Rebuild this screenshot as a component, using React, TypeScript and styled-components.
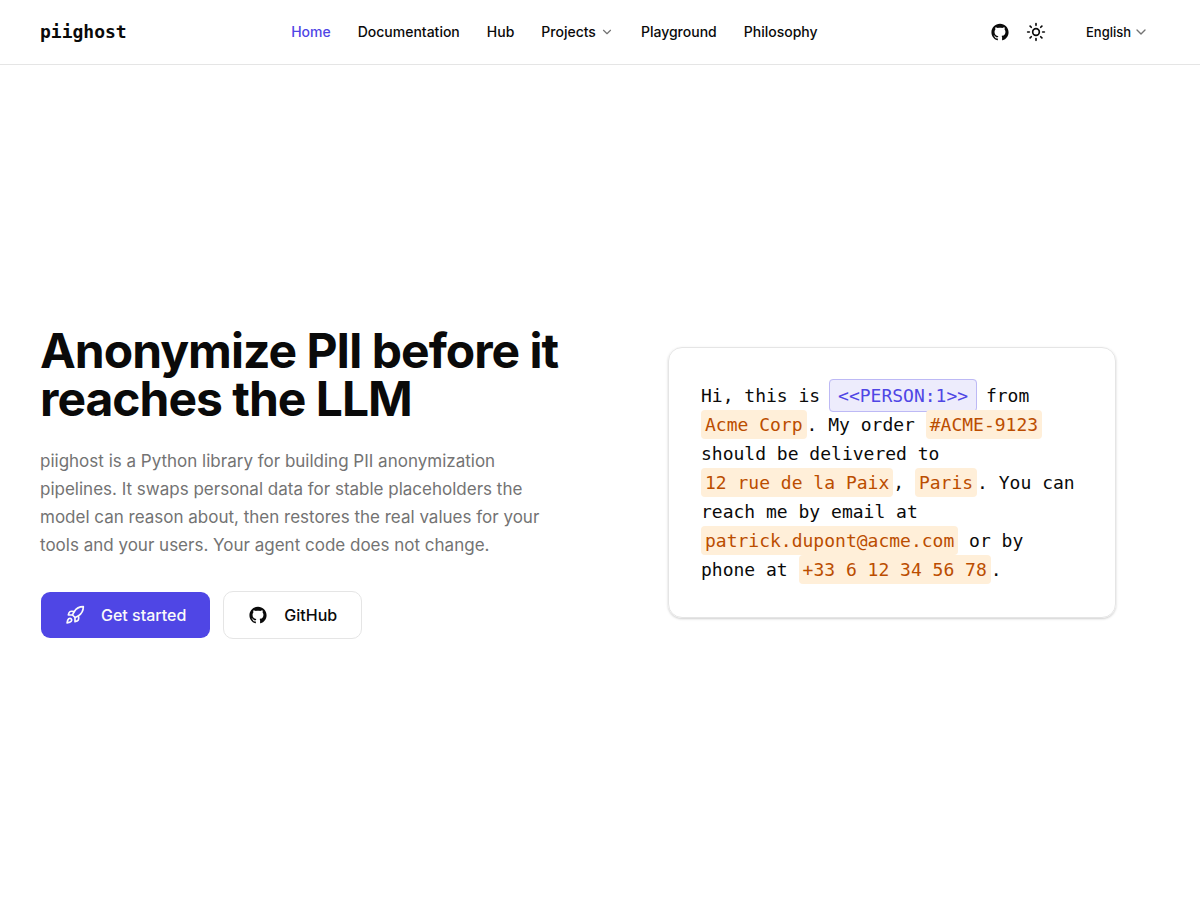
import React from "react";
import styled, { createGlobalStyle } from "styled-components";
import { ChevronDown, Rocket, Sun } from "lucide-react";
import { SiGithub } from "react-icons/si";

const sans = `Inter, "Liberation Sans", sans-serif`;
const mono = `"DejaVu Sans Mono", "Liberation Mono", monospace`;

const GlobalStyle = createGlobalStyle`
  *, *::before, *::after { box-sizing: border-box; }
  body {
    margin: 0;
    background: #ffffff;
    color: #0a0a0a;
    font-family: ${sans};
  }
`;

const Page = styled.div`
  min-height: 100vh;
  display: flex;
  flex-direction: column;
`;

const Header = styled.header`
  display: flex;
  align-items: center;
  justify-content: space-between;
  min-height: 65px;
  padding: 0 40px;
  border-bottom: 1px solid #e5e5e5;
`;

const Brand = styled.a`
  font-family: ${mono};
  font-size: 18px;
  line-height: 28px;
  font-weight: 700;
  color: inherit;
  text-decoration: none;
`;

const Nav = styled.nav`
  display: flex;
  align-items: center;
  gap: 27px;
`;

const NavLink = styled.a<{ $active?: boolean }>`
  font-size: 14px;
  line-height: 20px;
  font-weight: 500;
  text-decoration: none;
  color: ${(p) => (p.$active ? "#4f46e5" : "inherit")};
`;

const NavMenu = styled.button`
  display: flex;
  align-items: center;
  gap: 4px;
  padding: 0;
  border: 0;
  background: none;
  font: 500 14px/20px ${sans};
  color: inherit;
  cursor: pointer;

  svg { color: #737373; }
`;

const Tools = styled.div`
  display: flex;
  align-items: center;
`;

const IconButton = styled.button`
  display: grid;
  place-items: center;
  width: 36px;
  height: 36px;
  padding: 0;
  border: 0;
  border-radius: 8px;
  background: none;
  color: inherit;
  cursor: pointer;
`;

const Language = styled.label`
  display: grid;
  align-items: center;
  margin-left: 20px;

  select, svg { grid-area: 1 / 1; }

  select {
    appearance: none;
    height: 32px;
    padding: 0 28px 0 12px;
    border: 0;
    background: none;
    font: 500 13px/20px ${sans};
    color: inherit;
    cursor: pointer;
  }

  svg {
    justify-self: end;
    margin-right: 11px;
    color: #737373;
    pointer-events: none;
  }
`;

const Hero = styled.main`
  flex: 1;
  display: grid;
  grid-template-columns: 1fr 1fr;
  gap: 48px;
  align-items: center;
  padding: 40px;
`;

const Title = styled.h1`
  margin: 0 0 24px;
  font-size: 48px;
  line-height: 48px;
  font-weight: 700;
  letter-spacing: -1px;
`;

const Lead = styled.p`
  max-width: 528px;
  margin: 0 0 32px;
  font-size: 17px;
  line-height: 28px;
  color: #737373;
`;

const Actions = styled.div`
  display: flex;
  gap: 12px;
`;

const ActionLink = styled.a<{ $primary?: boolean }>`
  display: inline-flex;
  align-items: center;
  gap: 16px;
  height: 48px;
  padding: 0 24px;
  border: 1px solid ${(p) => (p.$primary ? "transparent" : "#e5e5e5")};
  border-radius: 10px;
  background: ${(p) => (p.$primary ? "#4f46e5" : "#ffffff")};
  background-clip: padding-box;
  color: ${(p) => (p.$primary ? "#fafafa" : "#0a0a0a")};
  font-size: 16px;
  line-height: 24px;
  font-weight: 500;
  text-decoration: none;
`;

const Card = styled.section`
  justify-self: center;
  width: 100%;
  max-width: 448px;
  padding: 33px 32px;
  border: 1px solid #e5e5e5;
  border-radius: 14px;
  box-shadow: 0 1px 3px rgba(0, 0, 0, 0.1), 0 1px 2px rgba(0, 0, 0, 0.1);
`;

const Message = styled.p`
  margin: 0;
  font-family: ${mono};
  font-size: 18px;
  line-height: 29px;
`;

const Entity = styled.span`
  display: inline-block;
  padding: 0 4px;
  border-radius: 4px;
  background: #ffefd9;
  color: #bb4d00;
`;

const Placeholder = styled.span`
  margin: 0 -2px;
  padding: 5px 8px;
  border: 1px solid #bdb9f5;
  border-radius: 4px;
  background: #edecfc;
  color: #4f46e5;
`;

const GithubMark = () => (
  <SiGithub size={20} viewBox="-2 -2 28 28" aria-hidden />
);

export default function App() {
  return (
    <Page>
      <GlobalStyle />
      <Header>
        <Brand href="#">piighost</Brand>
        <Nav aria-label="Main">
          <NavLink href="#" $active aria-current="page">Home</NavLink>
          <NavLink href="#docs">Documentation</NavLink>
          <NavLink href="#hub">Hub</NavLink>
          <NavMenu type="button" aria-haspopup="menu">
            Projects
            <ChevronDown size={14} aria-hidden />
          </NavMenu>
          <NavLink href="#playground">Playground</NavLink>
          <NavLink href="#philosophy">Philosophy</NavLink>
        </Nav>
        <Tools>
          <IconButton type="button" aria-label="GitHub repository">
            <GithubMark />
          </IconButton>
          <IconButton type="button" aria-label="Toggle theme">
            <Sun size={20} />
          </IconButton>
          <Language>
            <select aria-label="Language" defaultValue="en">
              <option value="en">English</option>
            </select>
            <ChevronDown size={16} aria-hidden />
          </Language>
        </Tools>
      </Header>
      <Hero>
        <div>
          <Title>Anonymize PII before it reaches the LLM</Title>
          <Lead>
            piighost is a Python library for building PII anonymization
            pipelines. It swaps personal data for stable placeholders the model
            can reason about, then restores the real values for your tools and
            your users. Your agent code does not change.
          </Lead>
          <Actions>
            <ActionLink href="#docs" $primary>
              <Rocket size={20} aria-hidden />
              Get started
            </ActionLink>
            <ActionLink href="#github">
              <GithubMark />
              GitHub
            </ActionLink>
          </Actions>
        </div>
        <Card>
          <Message>
            Hi, this is <Placeholder>&lt;&lt;PERSON:1&gt;&gt;</Placeholder> from{" "}
            <Entity>Acme Corp</Entity>. My order <Entity>#ACME-9123</Entity>{" "}
            should be delivered to <Entity>12 rue de la Paix</Entity>,{" "}
            <Entity>Paris</Entity>. You can reach me by email at{" "}
            <Entity>patrick.dupont@acme.com</Entity> or by phone at{" "}
            <Entity>+33 6 12 34 56 78</Entity>.
          </Message>
        </Card>
      </Hero>
    </Page>
  );
}
